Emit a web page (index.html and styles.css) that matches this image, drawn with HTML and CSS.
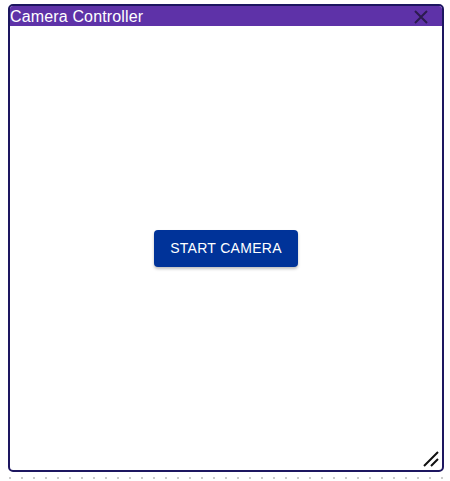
FILE: index.html
```html
<!DOCTYPE html>
<html>
<head>
<meta charset="utf-8">
<link rel="stylesheet" href="styles.css">
</head>
<body>
<div class="page">
  <div class="window">
    <div class="titlebar">
      <span class="title">Camera Controller</span>
      <svg class="close" width="16" height="16" viewBox="0 0 16 16"><path d="M2 2L14 14M14 2L2 14" stroke="#2b1b4f" stroke-width="2" fill="none"/></svg>
    </div>
    <div class="content">
      <button class="start">START CAMERA</button>
    </div>
    <svg class="resize" width="16" height="16" viewBox="0 0 16 16"><path d="M1 15L15 1M8 15L15 8" stroke="#111" stroke-width="2" fill="none"/></svg>
  </div>
  <div class="dots"></div>
</div>
</body>
</html>
```
FILE: styles.css
```css
html, body { margin: 0; padding: 0; background: #fff; }
.page { padding: 4px 6px 0 8px; }
.window {
  position: relative;
  width: 432px;
  height: 464px;
  border: 2px solid #1d1660;
  border-radius: 5px;
  display: flex;
  flex-direction: column;
  overflow: hidden;
}
.titlebar {
  height: 20px;
  background: #5e32a8;
  display: flex;
  align-items: center;
  justify-content: space-between;
  padding: 0 13px 0 0;
}
.title {
  font-family: "Liberation Sans", Arial, sans-serif;
  font-size: 16px;
  letter-spacing: 0.15px;
  color: #fff;
  line-height: 20px;
  margin-top: 1px;
}
.close { display: block; margin-top: 1px; }
.content {
  flex: 1;
  display: flex;
  align-items: center;
  justify-content: center;
}
.start {
  width: 144px;
  height: 37px;
  background: #003399;
  color: #fff;
  border: none;
  border-radius: 4px;
  font-family: "Liberation Sans", Arial, sans-serif;
  font-size: 14px;
  letter-spacing: 0.3px;
  box-shadow: 0 2px 3px rgba(0,0,0,0.25);
}
.resize { position: absolute; right: 3px; bottom: 3px; }
.dots {
  margin-top: 5px;
  margin-left: 1px;
  width: 436px;
  height: 2px;
  background: linear-gradient(to right, #ccc 0 2px, transparent 2px 12px);
  background-size: 12px 2px;
}
```
